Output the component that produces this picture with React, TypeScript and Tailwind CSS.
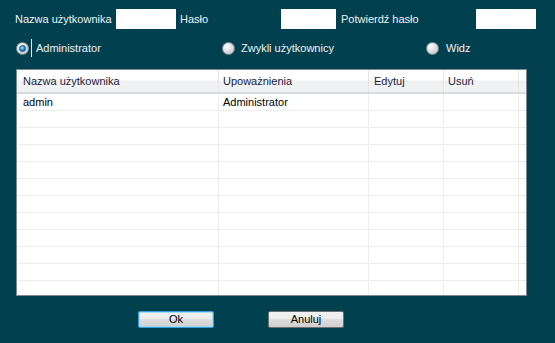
const font = { fontFamily: '"Liberation Sans", Arial, sans-serif' };

const Radio = ({ checked }: { checked?: boolean }) => (
  <span className="relative flex h-[13px] w-[13px] items-center justify-center rounded-full border border-[#8a8f94] bg-[radial-gradient(circle_at_35%_30%,#ffffff,#d4d6d8_60%,#b9bcbf)]">
    {checked && (
      <span className="h-[7px] w-[7px] rounded-full border border-[#0b4d86] bg-[radial-gradient(circle_at_40%_35%,#9fe0ff,#2a8fd8_55%,#0a4f92)]" />
    )}
  </span>
);

const cols = [
  { label: "Nazwa użytkownika", w: "w-[202px] pl-[6px]" },
  { label: "Upoważnienia", w: "w-[150px] pl-[4px]" },
  { label: "Edytuj", w: "w-[75px] pl-[5px]" },
  { label: "Usuń", w: "w-[75px] pl-[4px]" },
  { label: "", w: "w-[7px]" },
];

const rows = [
  ["admin", "Administrator", "", "", ""],
  ...Array.from({ length: 11 }, () => ["", "", "", "", ""]),
];

export default function App() {
  return (
    <div
      className="h-[343px] w-[555px] overflow-hidden bg-[#00404f] text-[11px] text-[#f2f2f2]"
      style={font}
    >
      {/* fields */}
      <div className="mt-[9px] flex h-[20px] items-center pl-[15px]">
        <span className="w-[101px]">Nazwa użytkownika</span>
        <input className="h-[20px] w-[60px] bg-white outline-none" />
        <span className="w-[105px] pl-[4px]">Hasło</span>
        <input className="h-[20px] w-[55px] bg-white outline-none" />
        <span className="w-[140px] pl-[5px]">Potwierdź hasło</span>
        <input className="h-[20px] w-[60px] bg-white outline-none" />
      </div>

      {/* roles */}
      <div className="mt-[10px] flex h-[18px] items-center">
        <div className="flex w-[222px] items-center pl-[16px]">
          <Radio checked />
          <span className="ml-[2px] h-[18px] w-px bg-[#e6e6e6]" />
          <span className="ml-[4px]">Administrator</span>
        </div>
        <div className="flex w-[204px] items-center">
          <Radio />
          <span className="ml-[6px]">Zwykli użytkownicy</span>
        </div>
        <div className="flex items-center">
          <Radio />
          <span className="ml-[7px]">Widz</span>
        </div>
      </div>

      {/* table */}
      <div className="ml-[16px] mt-[12px] w-[511px] border border-[#7f8790] bg-white text-[#1b1b3a]">
        <div className="flex h-[24px] border-b-2 border-[#d8dbde] bg-[linear-gradient(#ffffff,#ffffff_45%,#f1f2f4_50%,#f1f2f4)]">
          {cols.map((c, i) => (
            <div
              key={i}
              className={`${c.w} flex items-center border-r border-[#e3e5e7] last:border-r-0`}
            >
              {c.label}
            </div>
          ))}
        </div>
        <div className="h-[201px] overflow-hidden">
          {rows.map((r, ri) => (
            <div key={ri} className="flex h-[17px] border-b border-[#ededed]">
              {r.map((v, ci) => (
                <div
                  key={ci}
                  className={`${cols[ci].w} flex items-center border-r border-[#ededed] last:border-r-0 text-black`}
                >
                  {v}
                </div>
              ))}
            </div>
          ))}
        </div>
      </div>

      {/* actions */}
      <div className="mt-[15px] flex">
        <button className="ml-[138px] flex h-[17px] w-[76px] items-center justify-center rounded-[2px] border border-[#3c9ed8] bg-[linear-gradient(#f2f2f2,#ebebeb_50%,#dddddd_50%,#cfcfcf)] text-black shadow-[inset_0_0_0_1px_#9fdcf6]">
          Ok
        </button>
        <button className="ml-[54px] flex h-[17px] w-[76px] items-center justify-center rounded-[2px] border border-[#707070] bg-[linear-gradient(#f2f2f2,#ebebeb_50%,#dddddd_50%,#cfcfcf)] text-black">
          Anuluj
        </button>
      </div>
    </div>
  );
}
